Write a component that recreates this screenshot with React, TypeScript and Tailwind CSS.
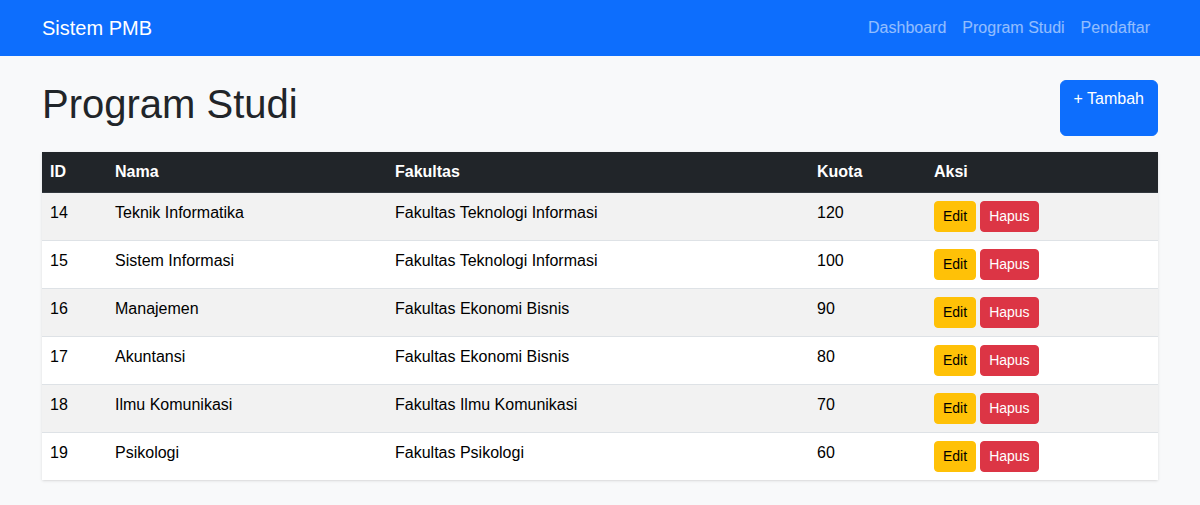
import React from "react";

interface Prodi {
  id: number;
  nama: string;
  fakultas: string;
  kuota: number;
}

const data: Prodi[] = [
  { id: 14, nama: "Teknik Informatika", fakultas: "Fakultas Teknologi Informasi", kuota: 120 },
  { id: 15, nama: "Sistem Informasi", fakultas: "Fakultas Teknologi Informasi", kuota: 100 },
  { id: 16, nama: "Manajemen", fakultas: "Fakultas Ekonomi Bisnis", kuota: 90 },
  { id: 17, nama: "Akuntansi", fakultas: "Fakultas Ekonomi Bisnis", kuota: 80 },
  { id: 18, nama: "Ilmu Komunikasi", fakultas: "Fakultas Ilmu Komunikasi", kuota: 70 },
  { id: 19, nama: "Psikologi", fakultas: "Fakultas Psikologi", kuota: 60 },
];

export default function App() {
  return (
    <div
      className="min-h-[505px] bg-[#f8f9fa] text-[#212529]"
      style={{ fontFamily: '"Liberation Sans", Arial, sans-serif' }}
    >
      <nav className="h-14 bg-[#0d6efd]">
        <div className="mx-auto flex h-full w-[1140px] items-center justify-between px-3">
          <a className="text-xl leading-[30px] text-white">Sistem PMB</a>
          <div className="flex">
            {["Dashboard", "Program Studi", "Pendaftar"].map((l) => (
              <a key={l} className="px-2 py-2 text-base leading-6 text-white/55">
                {l}
              </a>
            ))}
          </div>
        </div>
      </nav>

      <main className="mx-auto mt-6 w-[1140px] px-3">
        <div className="mb-4 flex justify-between">
          <h1 className="mb-2 text-[40px] leading-[48px] font-medium">Program Studi</h1>
          <button
            type="button"
            className="flex items-start rounded-md border border-[#0d6efd] bg-[#0d6efd] px-[13px] py-1.5 text-base leading-6 text-white"
          >
            + Tambah
          </button>
        </div>

        <table className="w-full table-fixed border-collapse bg-white text-base leading-6 text-black shadow-sm">
          <colgroup>
            <col className="w-[65px]" />
            <col className="w-[280px]" />
            <col className="w-[422px]" />
            <col className="w-[117px]" />
            <col />
          </colgroup>
          <thead>
            <tr className="bg-[#212529] text-left text-white">
              {["ID", "Nama", "Fakultas", "Kuota", "Aksi"].map((h) => (
                <th key={h} className="border-b border-[#32383e] p-2 font-bold">
                  {h}
                </th>
              ))}
            </tr>
          </thead>
          <tbody>
            {data.map((p, i) => (
              <tr
                key={p.id}
                className={`${i % 2 === 0 ? "bg-[#f2f2f2]" : "bg-white"} border-b border-[#dee2e6] align-top last:border-b-0`}
              >
                <td className="p-2">{p.id}</td>
                <td className="p-2">{p.nama}</td>
                <td className="p-2">{p.fakultas}</td>
                <td className="p-2">{p.kuota}</td>
                <td className="p-2">
                  <div className="flex gap-1">
                    <button
                      type="button"
                      className="rounded border border-[#ffc107] bg-[#ffc107] px-2 py-1 text-sm leading-[21px] text-black"
                    >
                      Edit
                    </button>
                    <button
                      type="button"
                      className="rounded border border-[#dc3545] bg-[#dc3545] px-2 py-1 text-sm leading-[21px] text-white"
                    >
                      Hapus
                    </button>
                  </div>
                </td>
              </tr>
            ))}
          </tbody>
        </table>
      </main>
    </div>
  );
}
